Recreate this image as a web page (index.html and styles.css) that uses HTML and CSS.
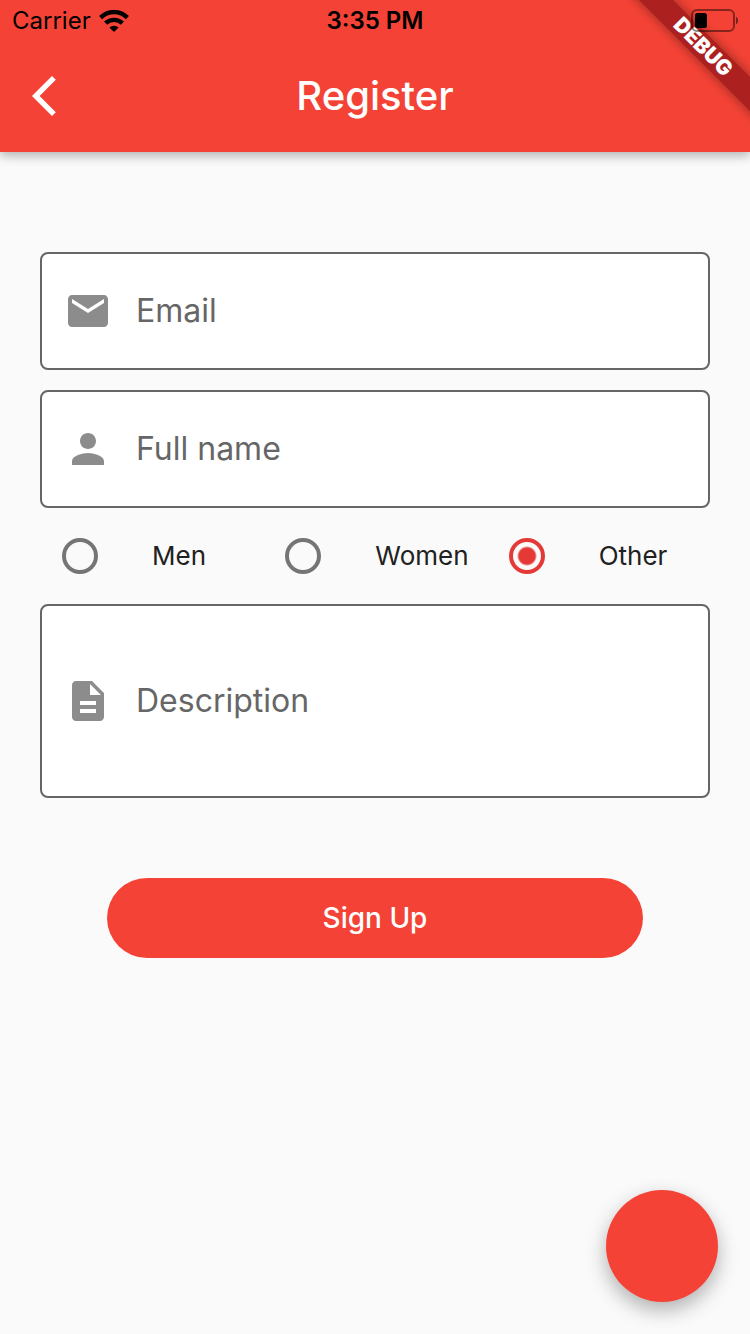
FILE: index.html
```html
<!DOCTYPE html>
<html lang="en">
<head>
<meta charset="utf-8">
<meta name="viewport" content="width=device-width, initial-scale=1">
<title>Register</title>
<link rel="stylesheet" href="styles.css">
</head>
<body>
<div class="app">
  <header class="app-header">
    <div class="banner-corner" aria-hidden="true"><div class="banner">DEBUG</div></div>
    <div class="status-bar">
      <div class="status-carrier">
        <span>Carrier</span>
        <svg class="wifi-icon" viewBox="0 0 30 22" aria-hidden="true">
          <g fill="none" stroke="#000" stroke-width="4.4">
            <path d="M1.6 7.600a19.1 19.1 0 0 1 26.8 0"/>
            <path d="M6.6 13.200a12.2 12.2 0 0 1 16.800 0"/>
          </g>
          <path d="M15 22l-4.600-4.400a6.900 6.900 0 0 1 9.200 0z"/>
        </svg>
      </div>
      <div class="status-time">3:35 PM</div>
      <div class="status-battery">
        <svg class="battery-icon" viewBox="0 0 47 24" aria-hidden="true">
          <rect x="1" y="1" width="42" height="21" rx="5" fill="none" stroke="#000" stroke-opacity=".45" stroke-width="2"/>
          <rect x="4" y="4" width="12" height="15" rx="2.500"/>
          <path d="M45 7.500c3 2 3 6 0 8z" fill-opacity=".5"/>
        </svg>
      </div>
    </div>
    <div class="toolbar">
      <button class="back-button" type="button" aria-label="Back">
        <svg class="back-icon" viewBox="0 0 24 40" aria-hidden="true"><path d="M20 0l3.800 3.800L7.600 20l16.200 16.200L20 40 0 20z" fill="#fff"/></svg>
      </button>
      <h1 class="title">Register</h1>
    </div>
  </header>

  <main class="content">
    <form class="form">
      <label class="field">
        <svg class="field-icon" viewBox="0 0 24 24" aria-hidden="true"><path d="M20 4H4c-1.100 0-1.990.9-1.990 2L2 18c0 1.100.9 2 2 2h16c1.100 0 2-.9 2-2V6c0-1.100-.9-2-2-2zm0 4l-8 5-8-5V6l8 5 8-5v2z"/></svg>
        <input class="field-input" type="email" placeholder="Email" aria-label="Email">
      </label>
      <label class="field">
        <svg class="field-icon" viewBox="0 0 24 24" aria-hidden="true"><path d="M12 12c2.210 0 4-1.790 4-4s-1.790-4-4-4-4 1.790-4 4 1.790 4 4 4zm0 2c-2.670 0-8 1.340-8 4v2h16v-2c0-2.660-5.330-4-8-4z"/></svg>
        <input class="field-input" type="text" placeholder="Full name" aria-label="Full name">
      </label>
      <div class="options" role="radiogroup" aria-label="Gender">
        <label class="option"><input class="radio" type="radio" name="gender" value="men"><span>Men</span></label>
        <label class="option"><input class="radio" type="radio" name="gender" value="women"><span>Women</span></label>
        <label class="option"><input class="radio" type="radio" name="gender" value="other" checked><span>Other</span></label>
      </div>
      <label class="field field-tall">
        <svg class="field-icon" viewBox="0 0 24 24" aria-hidden="true"><path d="M14 2H6c-1.100 0-1.990.9-1.990 2L4 20c0 1.100.89 2 1.990 2H18c1.100 0 2-.9 2-2V8l-6-6zm2 16H8v-2h8v2zm0-4H8v-2h8v2zm-3-5V3.500L18.500 9H13z"/></svg>
        <textarea class="field-input" rows="1" placeholder="Description" aria-label="Description"></textarea>
      </label>
      <button class="submit" type="button">Sign Up</button>
    </form>
  </main>
  <button class="fab" type="button" aria-label="Add"></button>
</div>
</body>
</html>
```
FILE: styles.css
```css
* {
  box-sizing: border-box;
}

body {
  margin: 0;
  background: #fafafa;
  color: #212121;
  font-family: Inter, Roboto, "Liberation Sans", sans-serif;
}

button,
input,
textarea {
  font: inherit;
}

.app {
  min-height: 100vh;
}

.app-header {
  position: relative;
  background: #f44336;
  box-shadow: 0 4px 10px rgba(0, 0, 0, 0.28);
}

.status-bar {
  position: relative;
  display: grid;
  grid-template-columns: 1fr auto 1fr;
  align-items: center;
  height: 40px;
  padding: 2px 12px 0;
  color: #000;
  font-size: 24px;
  line-height: 38px;
}

.status-carrier {
  display: flex;
  align-items: center;
  gap: 8px;
}

.wifi-icon {
  width: 30px;
  height: 22px;
}

.status-time {
  font-weight: 600;
}

.status-battery {
  display: flex;
  justify-content: flex-end;
}

.battery-icon {
  width: 47px;
  height: 24px;
}

.toolbar {
  display: grid;
  grid-template-columns: 112px 1fr 112px;
  align-items: center;
  height: 112px;
}

.back-button {
  display: flex;
  align-items: center;
  height: 96px;
  padding: 0 32px;
  border: 0;
  background: none;
}

.back-icon {
  width: 24px;
  height: 40px;
}

.title {
  margin: 0;
  color: #fff;
  font-size: 40px;
  font-weight: 500;
  line-height: 48px;
  text-align: center;
}

/* Diagonal ribbon across the top right corner */
.banner-corner {
  position: absolute;
  top: 0;
  right: 0;
  width: 152px;
  height: 152px;
  overflow: hidden;
}

.banner {
  position: absolute;
  top: 35px;
  right: -73px;
  width: 240px;
  height: 24px;
  transform: rotate(45deg);
  background: #ac211f;
  box-shadow: 0 0 12px rgba(0, 0, 0, 0.4);
  color: #fff;
  font-size: 21px;
  font-weight: 900;
  line-height: 24px;
  text-align: center;
}

.content {
  padding: 100px 40px 140px;
}

.form {
  display: flex;
  flex-direction: column;
}

.field {
  display: flex;
  align-items: center;
  gap: 24px;
  height: 118px;
  padding: 0 22px;
  border: 2px solid #666;
  border-radius: 8px;
  background: #fff;
}

.field + .field {
  margin-top: 20px;
}

.field-tall {
  height: 194px;
}

.field-icon {
  flex: none;
  width: 48px;
  height: 48px;
  fill: #8c8c8c;
}

.field-input {
  flex: 1;
  min-width: 0;
  height: 48px;
  padding: 0;
  border: 0;
  outline: 0;
  background: none;
  color: #212121;
  font-size: 32px;
  line-height: 48px;
  resize: none;
}

.field-input::placeholder {
  color: #666;
  opacity: 1;
}

.options {
  display: grid;
  grid-template-columns: repeat(3, 1fr);
  height: 96px;
}

.option {
  display: flex;
  align-items: center;
  gap: 54px;
  padding-left: 22px;
  font-size: 26px;
  line-height: 32px;
}

.radio {
  appearance: none;
  flex: none;
  width: 36px;
  height: 36px;
  margin: 0;
  border: 4px solid #757575;
  border-radius: 50%;
}

.radio:checked {
  border-color: #e53935;
  background: radial-gradient(circle, #e53935 8px, transparent 10px);
}

.submit {
  align-self: center;
  width: 80%;
  height: 80px;
  margin-top: 80px;
  border: 0;
  border-radius: 40px;
  background: #f44336;
  color: #fff;
  font-size: 28px;
  font-weight: 500;
}

.fab {
  position: fixed;
  right: 32px;
  bottom: 32px;
  width: 112px;
  height: 112px;
  border: 0;
  border-radius: 50%;
  background: #f44336;
  box-shadow: 0 8px 20px rgba(0, 0, 0, 0.3);
}
```
